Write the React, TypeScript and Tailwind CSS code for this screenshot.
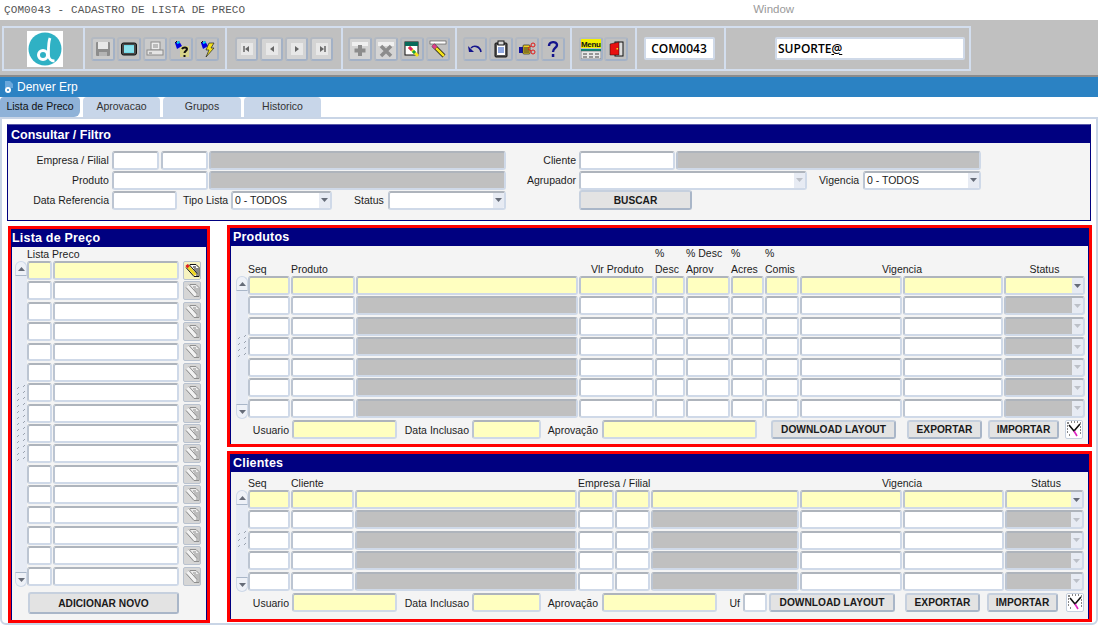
import React from 'react';

const sans = 'font-["Liberation_Sans",Arial,sans-serif]';
const label = 'text-[10.5px] leading-none text-[#1c1c1c] whitespace-nowrap';

type Tone = 'white' | 'yellow' | 'gray';

const toneClass: Record<Tone, string> = {
  white: 'bg-white',
  yellow: 'bg-[#ffffc0]',
  gray: 'bg-[#c0c0c0]',
};

const Field: React.FC<{ tone?: Tone; className?: string; children?: React.ReactNode }> = ({ tone = 'white', className = '', children }) => (
  <div className={`box-border h-full rounded-[3px] border-2 border-[#cfd9e8] border-t-[#aeb4bc] border-l-[#bcc5d2] ${toneClass[tone]} ${className}`}>
    {children}
  </div>
);

const Arrow: React.FC<{ dim?: boolean; up?: boolean }> = ({ dim, up }) => (
  <svg width="7" height="4" viewBox="0 0 7 4">
    <polygon points={up ? '0,4 7,4 3.500,0' : '0,0 7,0 3.500,4'} fill={dim ? '#bcc0c8' : '#666c78'} />
  </svg>
);

const Combo: React.FC<{ tone?: Tone; text?: string; dim?: boolean; className?: string }> = ({ tone = 'white', text, dim, className = '' }) => (
  <Field tone={tone} className={`flex overflow-hidden ${className}`}>
    <div className={`flex-1 pl-[2px] flex items-center ${label}`}>{text}</div>
    <div className="w-[11px] bg-[#e7ebf3] flex items-center justify-center">
      <Arrow dim={dim} />
    </div>
  </Field>
);

const Btn: React.FC<{ className?: string; children: React.ReactNode }> = ({ className = '', children }) => (
  <div className={`box-border flex items-center justify-center rounded-[3px] border-2 border-[#c6d0de] border-b-[#a9b6c8] border-r-[#a9b6c8] bg-[#e3e3e3] pt-px text-[10.2px] font-bold text-[#1a1a1a] whitespace-nowrap ${className}`}>
    {children}
  </div>
);

const Scrollbar: React.FC<{ grip: number }> = ({ grip }) => (
  <div className="w-3 h-full flex flex-col rounded-[6px] bg-[#e6ebf4]">
    <div className="h-[15px] flex items-center justify-center rounded-t-[6px] border border-[#cfd9e8] border-b-[#a9b6c8] bg-[#eef1f7]">
      <Arrow up />
    </div>
    <div className="flex-1 flex items-center justify-center">
      <svg width="10" height={grip} viewBox={`0 0 10 ${grip}`}>
        {Array.from({ length: Math.floor(grip / 6) }).map((_, i) => (
          <g key={i} stroke="#9aa3b0" strokeWidth="1">
            <path d={`M1 ${i * 6 + 4}l2 -2`} />
            <path d={`M7 ${i * 6 + 2}l2 -2`} />
          </g>
        ))}
      </svg>
    </div>
    <div className="h-[15px] flex items-center justify-center rounded-b-[6px] border border-[#cfd9e8] border-t-[#a9b6c8] bg-[#eef1f7]">
      <Arrow />
    </div>
  </div>
);

const Svg: React.FC<{ children: React.ReactNode; size?: number }> = ({ children, size = 18 }) => (
  <svg width={size} height={size} viewBox="0 0 18 18" fill="none">
    {children}
  </svg>
);

const Tool: React.FC<{ className?: string; children: React.ReactNode }> = ({ className = 'w-6 bg-[#c0c0c0]', children }) => (
  <div className={`h-[24px] box-border flex items-center justify-center rounded-[3px] border-2 border-[#b3b9c2] border-b-[#a3b1c6] border-r-[#a3b1c6] ${className}`}>
    {children}
  </div>
);

const Flash: React.FC = () => (
  <>
    <polygon points="3,3 7,1 10,6 5,9" fill="#0000e0" />
    <polygon points="5,2 7,1 8,3 5,4" fill="#00d8e8" />
    <path d="M3 3l2 -2" stroke="#111" />
  </>
);

const Floppy = () => (
  <Svg>
    <rect x="2" y="2" width="14" height="14" rx="1" fill="#8d8d8d" />
    <rect x="4" y="2" width="10" height="7" fill="#e8e8e8" />
    <rect x="5" y="12" width="8" height="4" fill="#b4b4b4" />
  </Svg>
);

const Monitor = () => (
  <Svg>
    <rect x="1.500" y="3" width="15" height="12" rx="2" fill="#4a4a4a" stroke="#111" />
    <rect x="4" y="5" width="10" height="8" fill="#6fd8e6" />
    <path d="M4 7h10M4 9h10M4 11h10" stroke="#a9e9f2" />
  </Svg>
);

const Printer = () => (
  <Svg>
    <rect x="5" y="2" width="9" height="8" fill="#ececec" stroke="#8a8a8a" />
    <path d="M7 5h5M7 7h5" stroke="#8a8a8a" />
    <rect x="1" y="10" width="16" height="5" fill="#e4e4e4" stroke="#8a8a8a" />
    <path d="M3 13h3" stroke="#777" />
  </Svg>
);

const QueryQ = () => (
  <Svg>
    <rect x="8" y="6" width="9" height="11" fill="#d6d48a" />
    <Flash />
    <path d="M10 9c1-2 5-2 5 0c0 2-2.500 2-2.500 4M12.500 15v2" stroke="#111" strokeWidth="2" />
  </Svg>
);

const QueryBolt = () => (
  <Svg>
    <Flash />
    <polygon points="11,3 16,3 13,8 16,8 8,17 11,10 8,10" fill="#f4e21a" stroke="#222" strokeWidth="0.700" />
  </Svg>
);

const Nav: React.FC<{ kind: 'first' | 'prev' | 'next' | 'last' }> = ({ kind }) => (
  <Svg>
    <rect x="3" y="3" width="12" height="12" fill="#e8e8e8" />
    {kind === 'first' && <path d="M6 6v6" stroke="#666" strokeWidth="1.500" />}
    {kind === 'last' && <path d="M12 6v6" stroke="#666" strokeWidth="1.500" />}
    {(kind === 'first' || kind === 'prev') && <polygon points="11,6 11,12 7,9" fill="#666" />}
    {(kind === 'last' || kind === 'next') && <polygon points="7,6 7,12 11,9" fill="#666" />}
  </Svg>
);

const PlusRec = () => (
  <Svg>
    <rect x="1" y="2" width="16" height="4" fill="#f0f0f0" />
    <path d="M9 5v11M3.500 10.500h11" stroke="#8c8c8c" strokeWidth="4" />
  </Svg>
);

const CrossRec = () => (
  <Svg>
    <rect x="1" y="2" width="16" height="4" fill="#f0f0f0" />
    <path d="M4 6l10 10M14 6l-10 10" stroke="#8c8c8c" strokeWidth="3.500" />
  </Svg>
);

const WindowPen = () => (
  <Svg>
    <rect x="2" y="2" width="13" height="13" fill="#fff" stroke="#111" />
    <rect x="2" y="2" width="13" height="4" fill="#0a6a5a" />
    <path d="M6 7l9 9" stroke="#f4e21a" strokeWidth="3" />
    <path d="M6 7l3 3" stroke="#e0206a" strokeWidth="3" />
    <path d="M10 11l2 2" stroke="#10a040" strokeWidth="3" />
  </Svg>
);

const Eraser = () => (
  <Svg>
    <rect x="1" y="1" width="16" height="3" fill="#fff" stroke="#444" strokeWidth="0.600" />
    <path d="M4 5l11 11" stroke="#111" strokeWidth="4" />
    <path d="M7 8l8 8" stroke="#f4e21a" strokeWidth="2.500" />
    <path d="M4 5l3 3" stroke="#e0408a" strokeWidth="3.500" />
  </Svg>
);

const Undo = () => (
  <Svg>
    <path d="M5 8c3-3 9-2 10 4" stroke="#14148c" strokeWidth="1.600" />
    <polygon points="2,6 8,12 3,12" fill="#14148c" />
  </Svg>
);

const Clipboard = () => (
  <Svg>
    <rect x="3" y="3" width="12" height="14" rx="1" fill="#555" stroke="#111" />
    <rect x="5" y="5" width="8" height="10" fill="#fff" />
    <path d="M6 8h6M6 10h6M6 12h6" stroke="#2050c0" />
    <rect x="6" y="1" width="6" height="4" fill="#d8d8d8" stroke="#111" />
  </Svg>
);

const HandCut = () => (
  <Svg>
    <rect x="1" y="7" width="4" height="6" fill="#1414a0" />
    <rect x="5" y="5" width="7" height="9" rx="1" fill="#f0d020" stroke="#222" strokeWidth="0.700" />
    <path d="M6 8h5M6 10h5M6 12h5" stroke="#222" />
    <circle cx="15" cy="5" r="2" stroke="#e01818" />
    <circle cx="15" cy="12" r="2" stroke="#e01818" />
    <path d="M13 6l-3 2M13 11l-3-2" stroke="#e01818" />
  </Svg>
);

const Help = () => (
  <Svg>
    <path d="M5 6c0-5 8-5 8-1c0 3-4 3-4 7" stroke="#14148c" strokeWidth="2.400" />
    <rect x="7.800" y="14" width="2.500" height="3" fill="#14148c" />
  </Svg>
);

const MenuIcon = () => (
  <svg width="20" height="20" viewBox="0 0 20 20">
    <rect x="0" y="0" width="20" height="9" fill="#f4f000" />
    <text x="0" y="8" fontSize="8" fontWeight="700" fill="#111" fontFamily="Liberation Sans" textLength="20">Menu</text>
    <rect x="0" y="10" width="20" height="2" fill="#0a8a7a" />
    <rect x="0" y="12" width="20" height="8" fill="#e8e8e8" stroke="#555" strokeWidth="0.600" />
    <path d="M2 15h4M8 15h4M14 15h4M2 18h4M8 18h4M14 18h4" stroke="#444" />
  </svg>
);

const Door = () => (
  <Svg>
    <rect x="8" y="2" width="8" height="14" fill="#ddd" stroke="#111" />
    <polygon points="3,4 12,2 12,15 3,15" fill="#e81010" stroke="#111" strokeWidth="0.500" />
    <rect x="9.500" y="8" width="1.500" height="1.500" fill="#f4e21a" />
  </Svg>
);

const EditIcon: React.FC<{ active?: boolean }> = ({ active }) => {
  const ink = active ? '#111' : '#8e8e8e';
  return (
    <div className={`box-border w-[18px] h-full rounded-[2px] border border-[#b9c2cf] flex items-center justify-center ${active ? 'bg-[#f6f2c0]' : 'bg-[#d6d6d6]'}`}>
      <svg width="15" height="15" viewBox="0 0 15 15" fill="none">
        <path d="M5 1.500h6l3 3v9H9" stroke={ink} fill={active ? '#fff' : '#ececec'} />
        <path d="M8 4h3M9 6h4M10 8h3M11 10h2M11 12h2" stroke={ink} />
        <path d="M2.500 3l8 9" stroke={active ? '#f0d820' : '#f2f2f2'} strokeWidth="3" />
        <path d="M1 4.500l8 9M4 1.500l8 9" stroke={ink} />
        {active && <path d="M1.500 2l2 2.200" stroke="#e02020" strokeWidth="3" />}
      </svg>
    </div>
  );
};

const Clock = () => (
  <div className="box-border w-[18px] h-[19px] rounded-[2px] border border-[#c6d0de] bg-white flex items-center justify-center">
    <svg width="16" height="16" viewBox="0 0 16 16" fill="none">
      <path d="M1 2h2M5 1h1M8 1h1M11 1h1M14 2h1M1 5h1M1 8h1M1 11h1M14 6h1M14 9h1M14 12h1M3 14h1" stroke="#111" />
      <path d="M3 4l5 6l6-7" stroke="#111" strokeWidth="1.600" />
      <path d="M8 10l3 5" stroke="#e020c0" strokeWidth="1.600" />
    </svg>
  </div>
);

const Logo = () => (
  <div className="w-[36px] h-[36px] bg-white flex items-center justify-center">
    <svg width="34" height="34" viewBox="0 0 34 34" fill="none">
      <circle cx="17" cy="17" r="16.500" fill="#2fb1c4" />
      <circle cx="15" cy="23" r="4.500" stroke="#fff" strokeWidth="3" />
      <path d="M22 6c-2 5-1.500 12-1.500 17c0 4 3 6 6 6" stroke="#fff" strokeWidth="2.800" />
    </svg>
  </div>
);

const Toolbar = () => (
  <div className="h-[57px] bg-[#c0c0c0] border-b-2 border-[#8c8c8c] pt-[6px] pl-[2px]">
    <div className="w-[969px] h-[45px] box-border border-2 border-[#d3deee] flex">
      <div className="w-[81px] border-r-2 border-[#d3deee] flex items-center justify-center pl-[2px]"><Logo /></div>
      <div className="w-[142px] border-r-2 border-[#d3deee] flex items-center justify-center gap-[2px]">
        <Tool className="w-6 bg-[#cacaca]"><Floppy /></Tool>
        <Tool><Monitor /></Tool>
        <Tool className="w-6 bg-[#cacaca]"><Printer /></Tool>
        <Tool><QueryQ /></Tool>
        <Tool><QueryBolt /></Tool>
      </div>
      <div className="w-[116px] border-r-2 border-[#d3deee] flex items-center justify-center gap-[2px]">
        <Tool className="w-[23px] bg-[#d4d4d4]"><Nav kind="first" /></Tool>
        <Tool className="w-[23px] bg-[#d4d4d4]"><Nav kind="prev" /></Tool>
        <Tool className="w-[23px] bg-[#d4d4d4]"><Nav kind="next" /></Tool>
        <Tool className="w-[23px] bg-[#d4d4d4]"><Nav kind="last" /></Tool>
      </div>
      <div className="w-[114px] border-r-2 border-[#d3deee] flex items-center justify-center gap-[2px]">
        <Tool className="w-6 bg-[#d4d4d4]"><PlusRec /></Tool>
        <Tool className="w-6 bg-[#d4d4d4]"><CrossRec /></Tool>
        <Tool><WindowPen /></Tool>
        <Tool><Eraser /></Tool>
      </div>
      <div className="w-[115px] border-r-2 border-[#d3deee] flex items-center justify-center gap-[2px]">
        <Tool><Undo /></Tool>
        <Tool><Clipboard /></Tool>
        <Tool><HandCut /></Tool>
        <Tool><Help /></Tool>
      </div>
      <div className="w-[65px] border-r-2 border-[#d3deee] flex items-center justify-center gap-[1px]">
        <Tool><MenuIcon /></Tool>
        <Tool><Door /></Tool>
      </div>
      <div className="w-[89px] border-r-2 border-[#d3deee] flex items-center justify-center pr-[3px]">
        <div className="w-[71px] h-[23px] box-border rounded-[2px] border-2 border-[#cfd9e8] bg-white flex items-center justify-center font-['Open_Sans',sans-serif] text-[12px] font-semibold text-black">COM0043</div>
      </div>
      <div className="flex-1 flex items-center pl-[49px]">
        <div className="w-[190px] h-[23px] box-border rounded-[2px] border-2 border-[#cfd9e8] bg-white flex items-center pl-[1px] font-['Open_Sans',sans-serif] text-[12px] font-semibold text-black">SUPORTE<span className="underline">@</span></div>
      </div>
    </div>
  </div>
);

const Tabs = () => (
  <div className="h-5 flex items-stretch text-[10.5px] text-[#333]">
    <div className="w-20 rounded-t-[4px] rounded-br-[6px] bg-[#8fb2d8] flex items-center justify-center text-[#111]">Lista de Preco</div>
    <div className="w-[77px] ml-[3px] rounded-t-[4px] bg-[#c8d6e9] flex items-center justify-center">Aprovacao</div>
    <div className="w-[78px] ml-[3px] rounded-t-[4px] bg-[#c8d6e9] flex items-center justify-center">Grupos</div>
    <div className="w-[77px] ml-[3px] rounded-t-[4px] bg-[#c8d6e9] flex items-center justify-center">Historico</div>
  </div>
);

const Filtro = () => (
  <div className="ml-[5px] mt-[5px] w-[1084px] h-[97px] box-border border border-[#000080] border-t-[#5a5aa8] bg-[#f4f4f4]">
    <div className="h-[18px] bg-[#000080] pl-[3px] pt-[2px] flex items-center text-white font-bold text-[12.5px]">Consultar / Filtro</div>
    <div className="flex pt-[7px]">
      <div className="w-[498px] flex flex-col">
        <div className="h-5 flex items-center">
          <span className={`w-[101px] mr-[3px] text-right ${label}`}>Empresa / Filial</span>
          <div className="w-[47px] h-[19px]"><Field /></div>
          <div className="w-[47px] h-[19px] ml-[2px]"><Field /></div>
          <div className="w-[298px] h-[19px] ml-px"><Field tone="gray" /></div>
        </div>
        <div className="h-5 flex items-center">
          <span className={`w-[101px] mr-[3px] text-right ${label}`}>Produto</span>
          <div className="w-[96px] h-[19px]"><Field /></div>
          <div className="w-[298px] h-[19px] ml-px"><Field tone="gray" /></div>
        </div>
        <div className="h-5 flex items-center">
          <span className={`w-[101px] mr-[3px] text-right ${label}`}>Data Referencia</span>
          <div className="w-[65px] h-[19px]"><Field /></div>
          <span className={`ml-[6px] w-[44px] ${label}`}>Tipo Lista</span>
          <div className="w-[101px] h-[19px] ml-[4px]"><Combo text="0 - TODOS" /></div>
          <span className={`ml-[22px] w-[30px] ${label}`}>Status</span>
          <div className="w-[118px] h-[19px] ml-[4px]"><Combo /></div>
        </div>
      </div>
      <div className="flex-1 flex flex-col">
        <div className="h-5 flex items-center">
          <span className={`w-[70px] mr-[3px] text-right ${label}`}>Cliente</span>
          <div className="w-[96px] h-[19px]"><Field /></div>
          <div className="w-[305px] h-[19px] ml-px"><Field tone="gray" /></div>
        </div>
        <div className="h-5 flex items-center">
          <span className={`w-[70px] mr-[3px] text-right ${label}`}>Agrupador</span>
          <div className="w-[228px] h-[19px]"><Combo dim /></div>
          <span className={`ml-[12px] w-[40px] ${label}`}>Vigencia</span>
          <div className="w-[118px] h-[19px] ml-[4px]"><Combo text="0 - TODOS" /></div>
        </div>
        <div className="h-5 flex items-center pl-[73px]">
          <Btn className="w-[113px] h-[20px]">BUSCAR</Btn>
        </div>
      </div>
    </div>
  </div>
);

const Panel: React.FC<{ title: string; className: string; titleClass?: string; children: React.ReactNode }> = ({ title, className, titleClass = 'pl-[3px]', children }) => (
  <div className={`box-border border-[3px] border-[#ff0000] ${className}`}>
    <div className="h-full flex flex-col border-x border-[#000080] bg-[#f4f4f4]">
      <div className={`h-[18px] -mx-px shrink-0 bg-[#000080] flex items-center text-white font-bold text-[12.5px] tracking-[0.2px] ${titleClass}`}>{title}</div>
      {children}
    </div>
  </div>
);

const Cell: React.FC<{ className: string; children: React.ReactNode }> = ({ className, children }) => (
  <div className={`h-full pr-px box-border ${className}`}>{children}</div>
);

const produtoWidths = ['w-[43px]', 'w-[65px]', 'w-[223px]', 'w-[76px]', 'w-[31px]', 'w-[45px]', 'w-[34px]', 'w-[35px]', 'w-[103px]', 'w-[101px]'];
const clienteWidths = ['w-[43px]', 'w-[64px]', 'w-[223px]', 'w-[37px]', 'w-[36px]', 'w-[149px]', 'w-[103px]', 'w-[102px]'];

const GridRows: React.FC<{ widths: string[]; rows: number; statusW: string; grayCols: number[]; grip: number; className: string }> = ({ widths, rows, statusW, grayCols, grip, className }) => (
  <div className={`flex pl-[5px] shrink-0 ${className}`}>
    <Scrollbar grip={grip} />
    <div className="flex-1 flex flex-col">
      {Array.from({ length: rows }).map((_, r) => (
        <div key={r} className="flex-1 min-h-0 flex pb-[1.400px]">
          {widths.map((w, c) => (
            <Cell key={c} className={w}>
              <Field tone={r === 0 ? 'yellow' : grayCols.includes(c) ? 'gray' : 'white'} />
            </Cell>
          ))}
          <div className={`h-full ${statusW}`}>
            <Combo tone={r === 0 ? 'yellow' : 'gray'} dim={r !== 0} />
          </div>
        </div>
      ))}
    </div>
  </div>
);

const footLabel = `pt-[2px] text-right ${label}`;

const Footer: React.FC<{ clientes?: boolean }> = ({ clientes }) => (
  <div className="h-[20px] shrink-0 flex items-center">
    <span className={`w-[58px] mr-[3px] ${footLabel}`}>Usuario</span>
    <div className="w-[105px] h-[19px]"><Field tone="yellow" /></div>
    <span className={`w-[72px] mr-[3px] ${footLabel}`}>Data Inclusao</span>
    <div className="w-[69px] h-[19px]"><Field tone="yellow" /></div>
    <span className={`w-[57px] mr-[4px] ${footLabel}`}>Aprovação</span>
    {clientes ? (
      <>
        <div className="w-[115px] h-[19px]"><Field tone="yellow" /></div>
        <span className={`ml-[12px] w-[11px] mr-[3px] ${footLabel}`}>Uf</span>
        <div className="w-6 h-[19px]"><Field /></div>
        <Btn className="w-[126px] h-[19px] ml-[2px]">DOWNLOAD LAYOUT</Btn>
        <Btn className="w-[75px] h-[19px] ml-[10px]">EXPORTAR</Btn>
        <Btn className="w-[71px] h-[19px] ml-[7px]">IMPORTAR</Btn>
        <div className="ml-[8px]"><Clock /></div>
      </>
    ) : (
      <>
        <div className="w-[155px] h-[19px]"><Field tone="yellow" /></div>
        <Btn className="w-[125px] h-[19px] ml-[14px]">DOWNLOAD LAYOUT</Btn>
        <Btn className="w-[75px] h-[19px] ml-[11px]">EXPORTAR</Btn>
        <Btn className="w-[71px] h-[19px] ml-[6px]">IMPORTAR</Btn>
        <div className="ml-[6px]"><Clock /></div>
      </>
    )}
  </div>
);

const Two: React.FC<{ w: string; top: string; bottom: string }> = ({ w, top, bottom }) => (
  <div className={`${w} flex flex-col gap-[5px] ${label}`}>
    <span>{top}</span>
    <span>{bottom}</span>
  </div>
);

const Produtos = () => (
  <Panel title="Produtos" className="h-[222px]">
    <div className="h-[30px] shrink-0 pl-[17px] flex items-end pb-[2px]">
      <span className={`w-[43px] ${label}`}>Seq</span>
      <span className={`w-[65px] ${label}`}>Produto</span>
      <span className="w-[235px]" />
      <span className={`w-[64px] ${label}`}>Vlr Produto</span>
      <Two w="w-[31px]" top="%" bottom="Desc" />
      <Two w="w-[45px]" top="% Desc" bottom="Aprov" />
      <Two w="w-[34px]" top="%" bottom="Acres" />
      <Two w="w-[35px]" top="%" bottom="Comis" />
      <span className={`w-[204px] text-center ${label}`}>Vigencia</span>
      <span className={`w-[81px] text-center ${label}`}>Status</span>
    </div>
    <GridRows widths={produtoWidths} rows={7} statusW="w-[81px]" grayCols={[2]} grip={26} className="h-[143px]" />
    <Footer />
  </Panel>
);

const Clientes = () => (
  <Panel title="Clientes" className="h-[171px] mt-1">
    <div className="h-[18px] shrink-0 pl-[17px] flex items-end pb-[2px]">
      <span className={`w-[43px] ${label}`}>Seq</span>
      <span className={`w-[64px] ${label}`}>Cliente</span>
      <span className={`w-[223px] ${label}`} />
      <span className={`w-[222px] ${label}`}>Empresa / Filial</span>
      <span className={`w-[204px] text-center ${label}`}>Vigencia</span>
      <span className={`w-[84px] text-center ${label}`}>Status</span>
    </div>
    <GridRows widths={clienteWidths} rows={5} statusW="w-[79px]" grayCols={[2, 5]} grip={20} className="h-[102px]" />
    <Footer clientes />
  </Panel>
);

const ListaPreco = () => (
  <Panel title="Lista de Preço" titleClass="pl-px" className="w-[202px] h-[397px] mt-px">
    <div className="h-[14px] shrink-0 pl-[15px] flex items-center">
      <span className={label}>Lista Preco</span>
    </div>
    <div className="h-[326px] shrink-0 flex pl-[3px]">
      <Scrollbar grip={78} />
      <div className="flex-1 flex flex-col">
        {Array.from({ length: 16 }).map((_, r) => (
          <div key={r} className="flex-1 min-h-0 flex pb-[1.400px]">
            <Cell className="w-[26px]"><Field tone={r === 0 ? 'yellow' : 'white'} /></Cell>
            <Cell className="w-[127px]"><Field tone={r === 0 ? 'yellow' : 'white'} /></Cell>
            <div className="ml-[3px] h-full"><EditIcon active={r === 0} /></div>
          </div>
        ))}
      </div>
    </div>
    <div className="pl-[16px] pt-[5px]">
      <Btn className="w-[151px] h-[22px]">ADICIONAR NOVO</Btn>
    </div>
  </Panel>
);

export default function App() {
  return (
    <div className={`w-[1098px] h-[628px] overflow-hidden bg-white flex flex-col ${sans}`}>
      <div className="h-5 flex items-center">
        <span className="pl-[4px] font-['Liberation_Mono',monospace] text-[11px] tracking-[0.1px] text-[#555]">ÇOM0043 - CADASTRO DE LISTA DE PRECO</span>
        <span className="ml-[508px] text-[11.500px] text-[#9a9a9a]">Window</span>
      </div>
      <Toolbar />
      <div className="h-5 bg-[#2b82c3] flex items-center pl-[3px] text-white text-[12px]">
        <svg width="11" height="14" viewBox="0 0 11 14" fill="none">
          <path d="M2 1h5l3 3v4H2z" fill="#6aa8dc" />
          <circle cx="5" cy="10" r="3" fill="#fff" />
          <circle cx="5" cy="10" r="1" fill="#2b82c3" />
        </svg>
        <span className="ml-[3px]">Denver Erp</span>
      </div>
      <Tabs />
      <div className="h-[508px] box-border border-2 border-[#c9d5e6] rounded-b-[6px]">
        <Filtro />
        <div className="flex mt-1 ml-[6px]">
          <ListaPreco />
          <div className="ml-[17px] w-[865px] flex flex-col">
            <Produtos />
            <Clientes />
          </div>
        </div>
      </div>
    </div>
  );
}
